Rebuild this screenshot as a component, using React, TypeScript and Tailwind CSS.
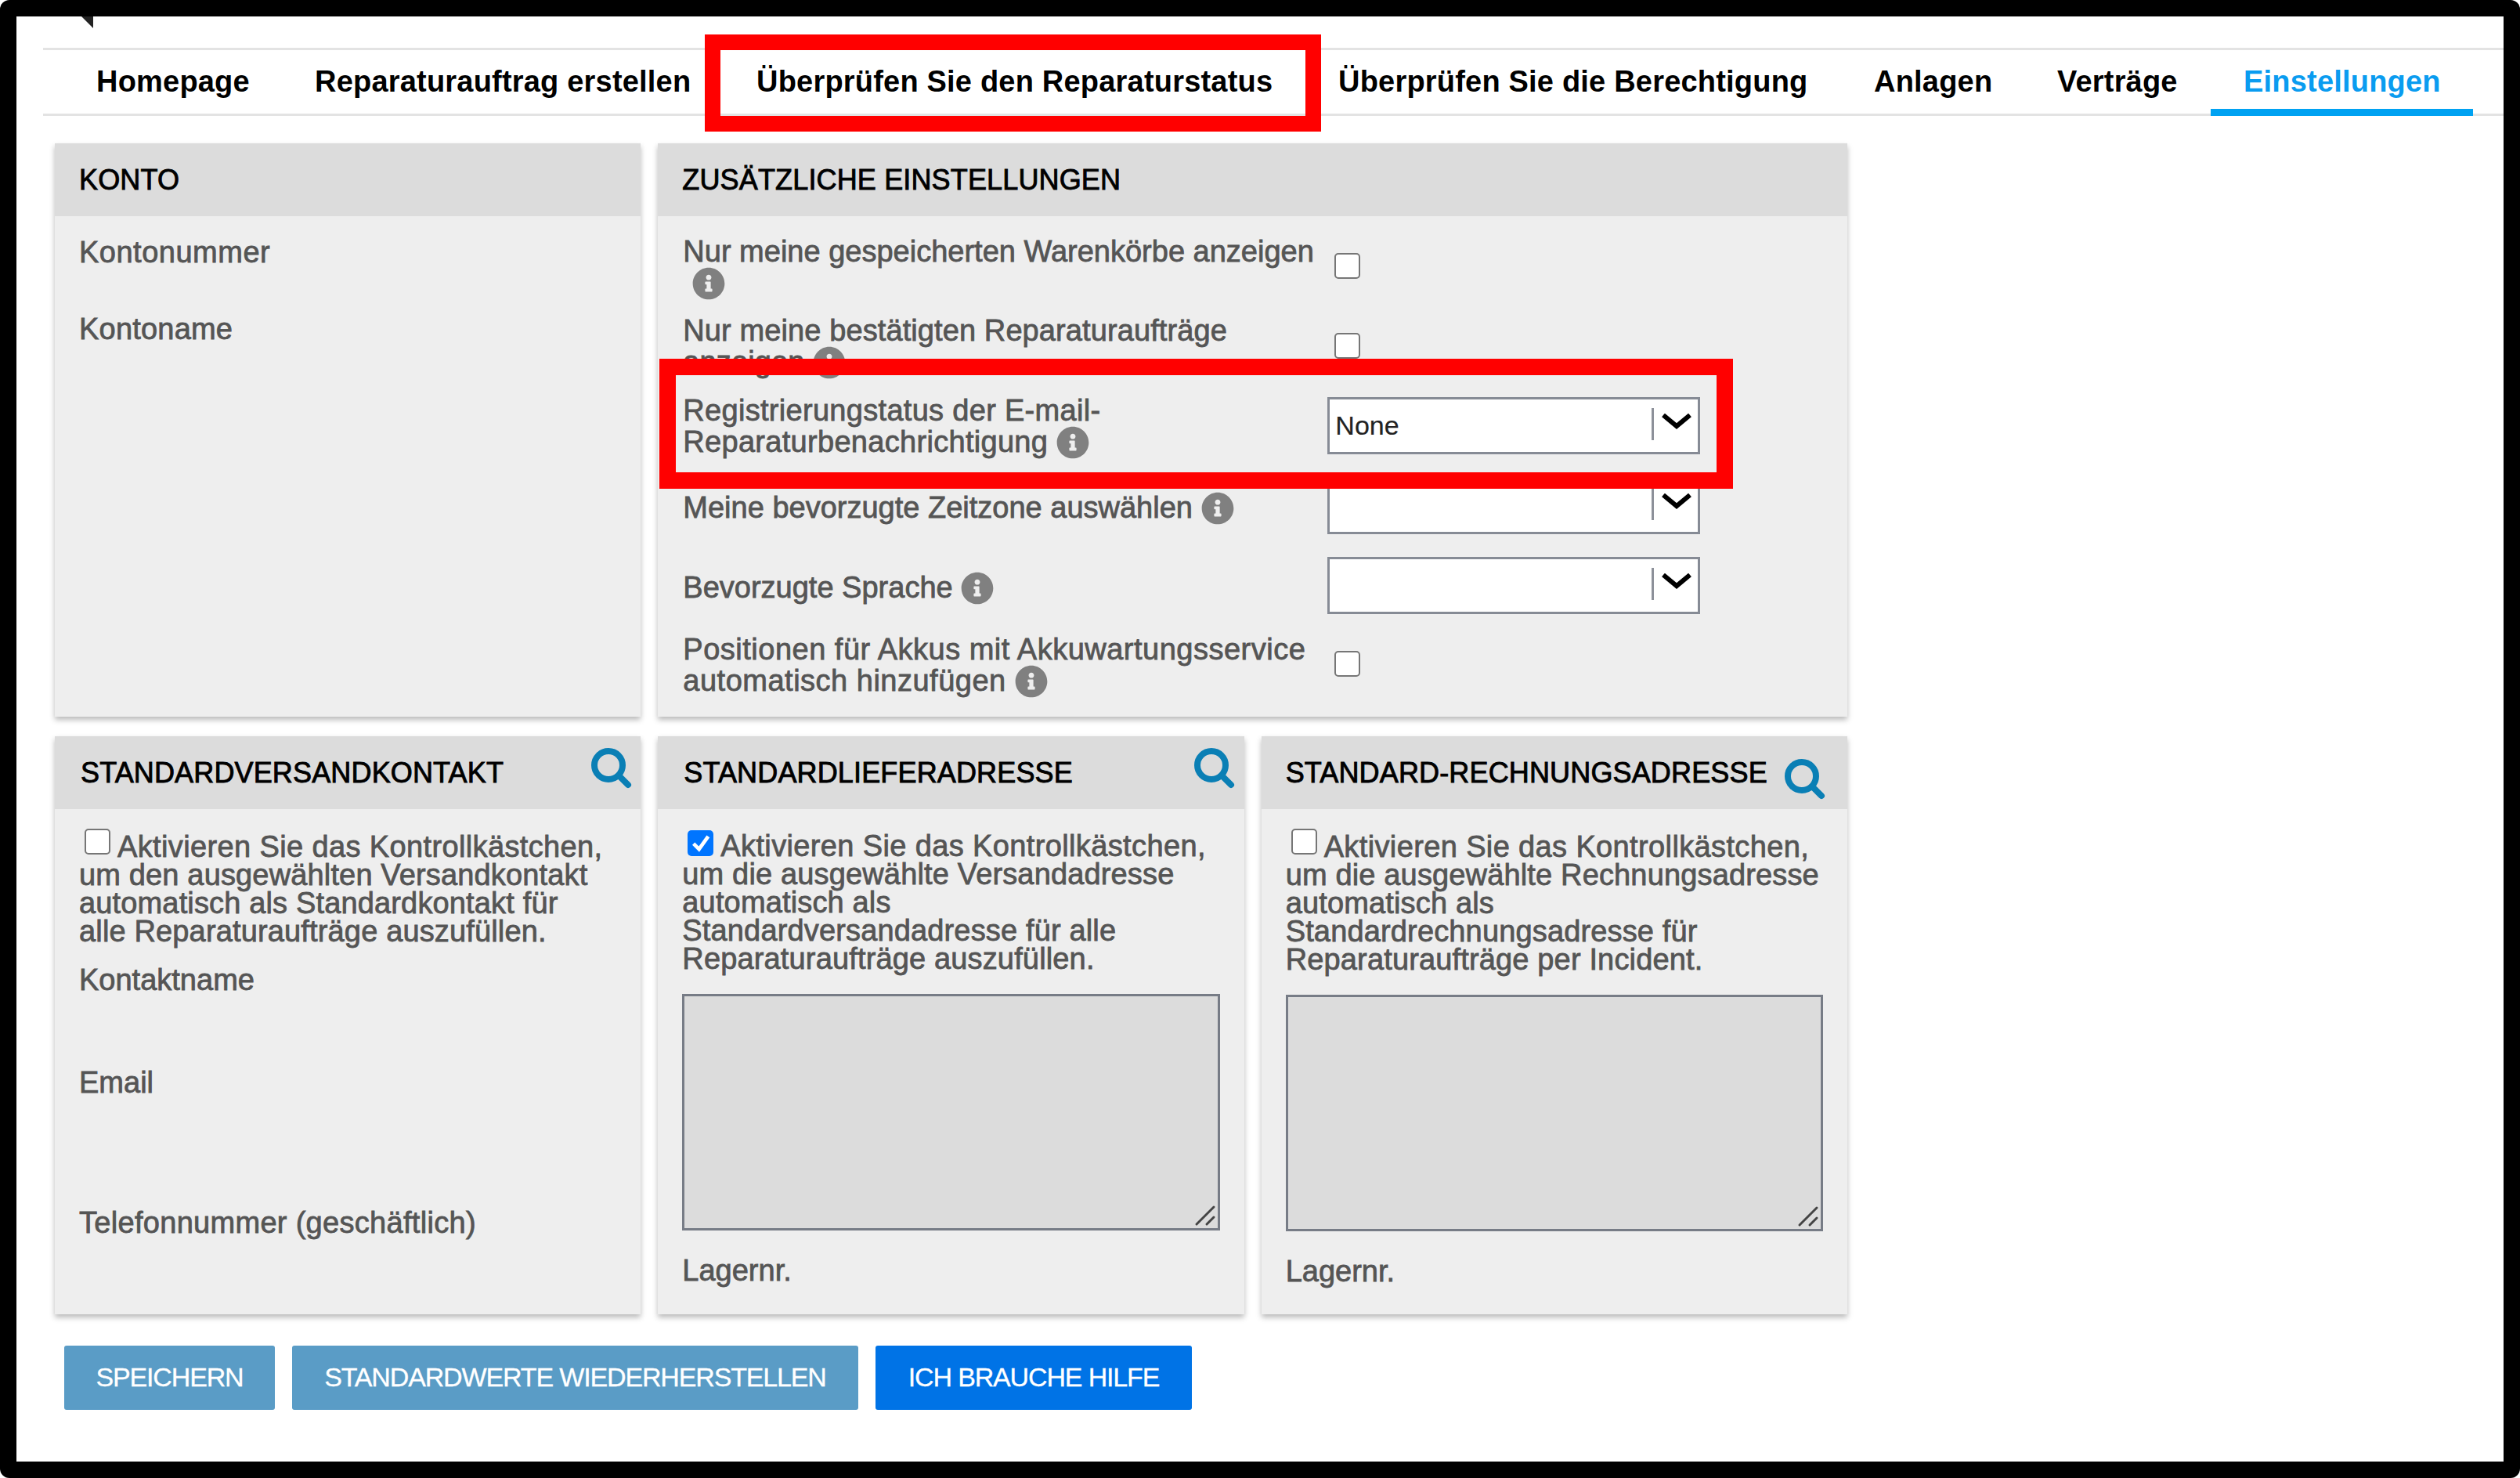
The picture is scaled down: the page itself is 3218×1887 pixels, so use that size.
import React from 'react';
import { FaInfoCircle } from 'react-icons/fa';

const tabs = [
  { label: 'Homepage', width: 'w-[279px]' },
  { label: 'Reparaturauftrag erstellen', width: 'w-[564px]' },
  { label: 'Überprüfen Sie den Reparaturstatus', width: 'w-[743px]' },
  { label: 'Überprüfen Sie die Berechtigung', width: 'w-[684px]' },
  { label: 'Anlagen', width: 'w-[234px]' },
  { label: 'Verträge', width: 'w-[238px]' },
];

const Info = ({ className = '' }: { className?: string }) => (
  <FaInfoCircle className={`inline-block w-[42px] h-[42px] text-[#808080] align-[-9px] ${className}`} />
);

const SearchIcon = ({ className = '' }: { className?: string }) => (
  <svg viewBox="0 0 52 52" className={`w-[52px] h-[52px] shrink-0 ${className}`} fill="none" stroke="#0a7fb5" strokeWidth="8" strokeLinecap="round">
    <circle cx="22" cy="22" r="18" />
    <line x1="35" y1="35" x2="47" y2="47" />
  </svg>
);

const Check = () => (
  <span className="block w-[33px] h-[33px] shrink-0 bg-white border-2 border-[#767676] rounded-[5px]" />
);

const Select = ({ value = '' }: { value?: string }) => (
  <div className="relative w-[476px] h-[73px] mt-[2px] shrink-0 bg-white border-[3px] border-[#868b95] flex items-center pl-[7px] text-[34px] text-[#222] [-webkit-text-stroke:0.2px_#222]">
    <span>{value}</span>
    <span className="absolute left-[411px] top-[11px] w-[3px] h-[41px] bg-[#8d919a]" />
    <svg viewBox="0 0 38 20" className="absolute left-[424px] top-[18px] w-[38px] h-[20px]" fill="none" stroke="#000" strokeWidth="6">
      <polyline points="2,2 19,16 36,2" />
    </svg>
  </div>
);

const Panel = ({ title, className = '', indent = 'pl-[31px]', icon, children }: { title: string; className?: string; indent?: string; icon?: React.ReactNode; children: React.ReactNode }) => (
  <section className={`bg-[#eeeeee] shadow-[0_4px_7px_rgba(0,0,0,0.28)] flex flex-col ${className}`}>
    <header className={`relative h-[93px] shrink-0 bg-[#dcdcdc] ${indent} flex items-center text-[36px] tracking-[0.15px] text-black [-webkit-text-stroke:0.9px_#000]`}>
      {title}
      {icon}
    </header>
    {children}
  </section>
);

const Row = ({ label, control }: { label: React.ReactNode; control: React.ReactNode }) => (
  <div className="h-[101.6px] flex items-center">
    <div className="w-[823px] pt-[5px] leading-[39px]">{label}</div>
    {control}
  </div>
);

const Intro = ({ checked, lines }: { checked?: boolean; lines: string[] }) => (
  <div className="whitespace-nowrap tracking-[0.15px]">
    <span className="inline-flex h-[24px] items-center align-[3px] ml-[7px] mr-[9px]">
      {checked ? (
        <span className="flex w-[33px] h-[33px] items-center justify-center bg-[#0075ff] rounded-[5px]">
          <svg viewBox="0 0 24 24" className="w-[28px] h-[28px]" fill="none" stroke="#fff" strokeWidth="4">
            <polyline points="4,13 10,19 20,5" />
          </svg>
        </span>
      ) : (
        <Check />
      )}
    </span>
    {lines.map((l, i) => (
      <React.Fragment key={i}>
        <span className={i === 0 ? 'tracking-[0.37px]' : ''}>{l}</span>
        <br />
      </React.Fragment>
    ))}
  </div>
);

const AddressBody = ({ checked, lines }: { checked?: boolean; lines: string[] }) => (
  <div className="flex flex-col px-[31px] pt-[29px] leading-[36px]">
    <Intro checked={checked} lines={lines} />
    <div className="relative mt-[27px] h-[302px] bg-[#dcdcdc] border-[3px] border-[#777c86]">
      <svg viewBox="0 0 28 28" className="absolute right-[2px] bottom-[2px] w-[28px] h-[28px]" stroke="#444" strokeWidth="3" strokeLinecap="round">
        <line x1="3" y1="25" x2="25" y2="3" />
        <line x1="16" y1="25" x2="25" y2="16" />
      </svg>
    </div>
    <div className="mt-[33px]">Lagernr.</div>
  </div>
);

export default function App() {
  return (
    <div className="relative w-[3218px] h-[1887px] bg-black rounded-[12px] p-[21px] font-['Liberation_Sans',Arial,sans-serif] text-[38px] text-[#555] [-webkit-text-stroke:0.8px_#555]">
      <div className="relative flex flex-col h-full bg-white">
        {/* clipped corner of the logo above the nav */}
        <svg viewBox="0 0 15 15" className="absolute left-[83px] top-0 w-[15px] h-[15px]">
          <polygon points="0,0 15,0 15,15" fill="#222" />
        </svg>

        <nav className="mt-[40px] ml-[34px] h-[87px] shrink-0 border-y-[3px] border-[#e3e3e3] flex pl-[26px] font-bold tracking-[0.2px] text-black [-webkit-text-stroke:0]">
          {tabs.map((t) => (
            <a key={t.label} className={`${t.width} shrink-0 pl-[42px] leading-[80px] whitespace-nowrap`}>
              {t.label}
            </a>
          ))}
          <a className="w-[335px] shrink-0 h-[84px] border-b-[9px] border-[#00a2f2] pl-[42px] leading-[80px] text-[#0a9cf0]">Einstellungen</a>
        </nav>

        <main className="ml-[49px] mt-[35px] w-[2289px] grid grid-cols-3 gap-x-[22px] gap-y-[25px] grid-rows-[732px_738px]">
          <Panel title="KONTO">
            <div className="px-[31px] pt-[18px]">
              <div className="h-[98px] tracking-[0.5px]">Kontonummer</div>
              <div className="tracking-[0.2px]">Kontoname</div>
            </div>
          </Panel>

          <Panel title="ZUSÄTZLICHE EINSTELLUNGEN" className="col-span-2">
            <div className="pl-[32px] pt-[13px]">
              <Row
                label={<>Nur meine gespeicherten Warenkörbe anzeigen <br /><Info className="ml-[12px]" /></>}
                control={<span className="ml-[9px]"><Check /></span>}
              />
              <Row
                label={<span className="tracking-[0.1px]">Nur meine bestätigten Reparaturaufträge<br />anzeigen <Info /></span>}
                control={<span className="ml-[9px]"><Check /></span>}
              />
              <Row
                label={<span className="tracking-[0.3px]">Registrierungstatus der E-mail-<br />Reparaturbenachrichtigung <Info /></span>}
                control={<Select value="None" />}
              />
              <Row label={<span className="block pt-[4px]">Meine bevorzugte Zeitzone auswählen <Info /></span>} control={<Select />} />
              <Row label={<span className="block pt-[4px]">Bevorzugte Sprache <Info /></span>} control={<Select />} />
              <Row
                label={<span className="tracking-[0.5px]">Positionen für Akkus mit Akkuwartungsservice<br />automatisch hinzufügen <Info /></span>}
                control={<span className="ml-[9px]"><Check /></span>}
              />
            </div>
          </Panel>

          <Panel title="STANDARDVERSANDKONTAKT" indent="pl-[33px]" icon={<SearchIcon className="absolute left-[685px] top-[15px]" />}>
            <div className="flex flex-col px-[31px] pt-[29px] leading-[36px]">
              <Intro
                lines={[
                  'Aktivieren Sie das Kontrollkästchen,',
                  'um den ausgewählten Versandkontakt',
                  'automatisch als Standardkontakt für',
                  'alle Reparaturaufträge auszufüllen.',
                ]}
              />
              <div className="mt-[26px]">Kontaktname</div>
              <div className="mt-[95px]">Email</div>
              <div className="mt-[143px] tracking-[0.3px]">Telefonnummer (geschäftlich)</div>
            </div>
          </Panel>

          <Panel title="STANDARDLIEFERADRESSE" indent="pl-[33px]" icon={<SearchIcon className="absolute left-[685px] top-[15px]" />}>
            <AddressBody
              checked
              lines={[
                'Aktivieren Sie das Kontrollkästchen,',
                'um die ausgewählte Versandadresse',
                'automatisch als',
                'Standardversandadresse für alle',
                'Reparaturaufträge auszufüllen.',
              ]}
            />
          </Panel>

          <Panel title="STANDARD-RECHNUNGSADRESSE" icon={<SearchIcon className="absolute left-[668px] top-[29px]" />}>
            <AddressBody
              lines={[
                'Aktivieren Sie das Kontrollkästchen,',
                'um die ausgewählte Rechnungsadresse',
                'automatisch als',
                'Standardrechnungsadresse für',
                'Reparaturaufträge per Incident.',
              ]}
            />
          </Panel>
        </main>

        <div className="ml-[61px] mt-[40px] flex gap-x-[22px] text-white text-[34px] tracking-[-1.15px] [-webkit-text-stroke:0.3px_#fff]">
          <button className="w-[269px] h-[82px] pb-[2px] bg-[#5a9cc6] rounded-[3px]">SPEICHERN</button>
          <button className="w-[723px] h-[82px] pb-[2px] bg-[#5a9cc6] rounded-[3px]">STANDARDWERTE WIEDERHERSTELLEN</button>
          <button className="w-[404px] h-[82px] pb-[2px] bg-[#0073e6] rounded-[3px]">ICH BRAUCHE HILFE</button>
        </div>

        {/* red annotation boxes drawn on top of the screenshot */}
        <div className="absolute left-[879px] top-[23px] w-[787px] h-[124px] border-[20px] border-[#ff0000]" />
        <div className="absolute left-[821px] top-[437px] w-[1371px] h-[166px] border-[21px] border-[#ff0000]" />
      </div>
    </div>
  );
}
